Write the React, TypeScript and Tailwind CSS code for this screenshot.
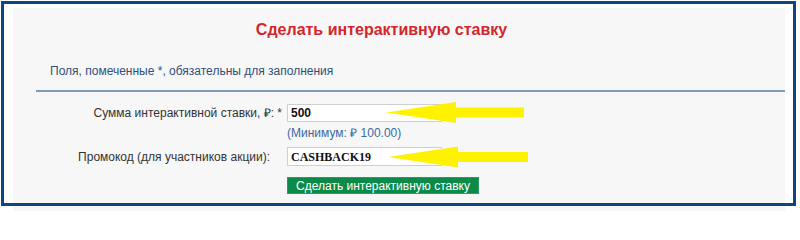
import React from "react";

export default function App() {
  return (
    <div className="relative w-[800px] h-[211px] bg-white overflow-hidden" style={{ fontFamily: '"Liberation Sans", Arial, sans-serif' }}>
      <div className="ml-[1px] mt-[1px] w-[795px] h-[205px] border-[3px] border-[#11457f] bg-white pl-[9px] pr-[8px] pt-[4px]">
        <div className="h-full bg-[#f7f7f7]">
          <div className="pt-[13px] pr-[35px] text-center text-[16px] leading-[18px] font-bold text-[#d3262c]">
            Сделать интерактивную ставку
          </div>
          <div className="mt-[25px] pl-[37px] text-[12px] leading-[14px] text-[#2f4f7b]">
            Поля, помеченные *, обязательны для заполнения
          </div>
          <div className="mt-[12px] ml-[23px] h-[2px] bg-[#7f9bba]" />
          <div className="mt-[12px] flex items-center">
            <div className="w-[269px] text-right text-[12px] leading-[14px] text-[#333]">
              Сумма интерактивной ставки, ₽: *
            </div>
            <div className="ml-[5px] w-[155px] h-[18px] border border-[#cfcfcf] bg-white pl-[3px] flex items-center text-[12px] font-bold text-[#111]">
              500
            </div>
          </div>
          <div className="mt-[4px] pl-[274px] text-[12px] leading-[14px] text-[#3b6aa0]">
            (Минимум: ₽ 100.00)
          </div>
          <div className="mt-[7px] flex items-center">
            <div className="w-[269px] pr-[12px] text-right text-[12px] leading-[14px] text-[#333]">
              Промокод (для участников акции):
            </div>
            <div
              className="ml-[5px] w-[155px] h-[19px] border border-[#cfcfcf] bg-white pl-[3px] flex items-center text-[12px] font-bold text-[#111]"
              style={{ fontFamily: '"Liberation Serif", "Times New Roman", serif' }}
            >
              CASHBACK19
            </div>
          </div>
          <div className="mt-[11px] pl-[274px]">
            <div className="w-[192px] h-[17px] bg-[#0c8a49] border border-[#2a9a5e] flex items-center justify-center text-[12px] leading-[14px] text-white">
              Сделать интерактивную ставку
            </div>
          </div>
        </div>
      </div>
      <div className="ml-[13px] w-[772px] h-[5px] bg-[#f7f7f7]" />
      <svg className="absolute left-0 top-0" width="800" height="211" viewBox="0 0 800 211">
        <path d="M386 112.5 L456 102 L456 107.5 L524 107.5 L524 117.5 L456 117.5 L456 123 Z" fill="#fff200" />
        <path d="M388 157 L458 146.5 L458 152 L528 152 L528 162 L458 162 L458 167.5 Z" fill="#fff200" />
      </svg>
    </div>
  );
}
